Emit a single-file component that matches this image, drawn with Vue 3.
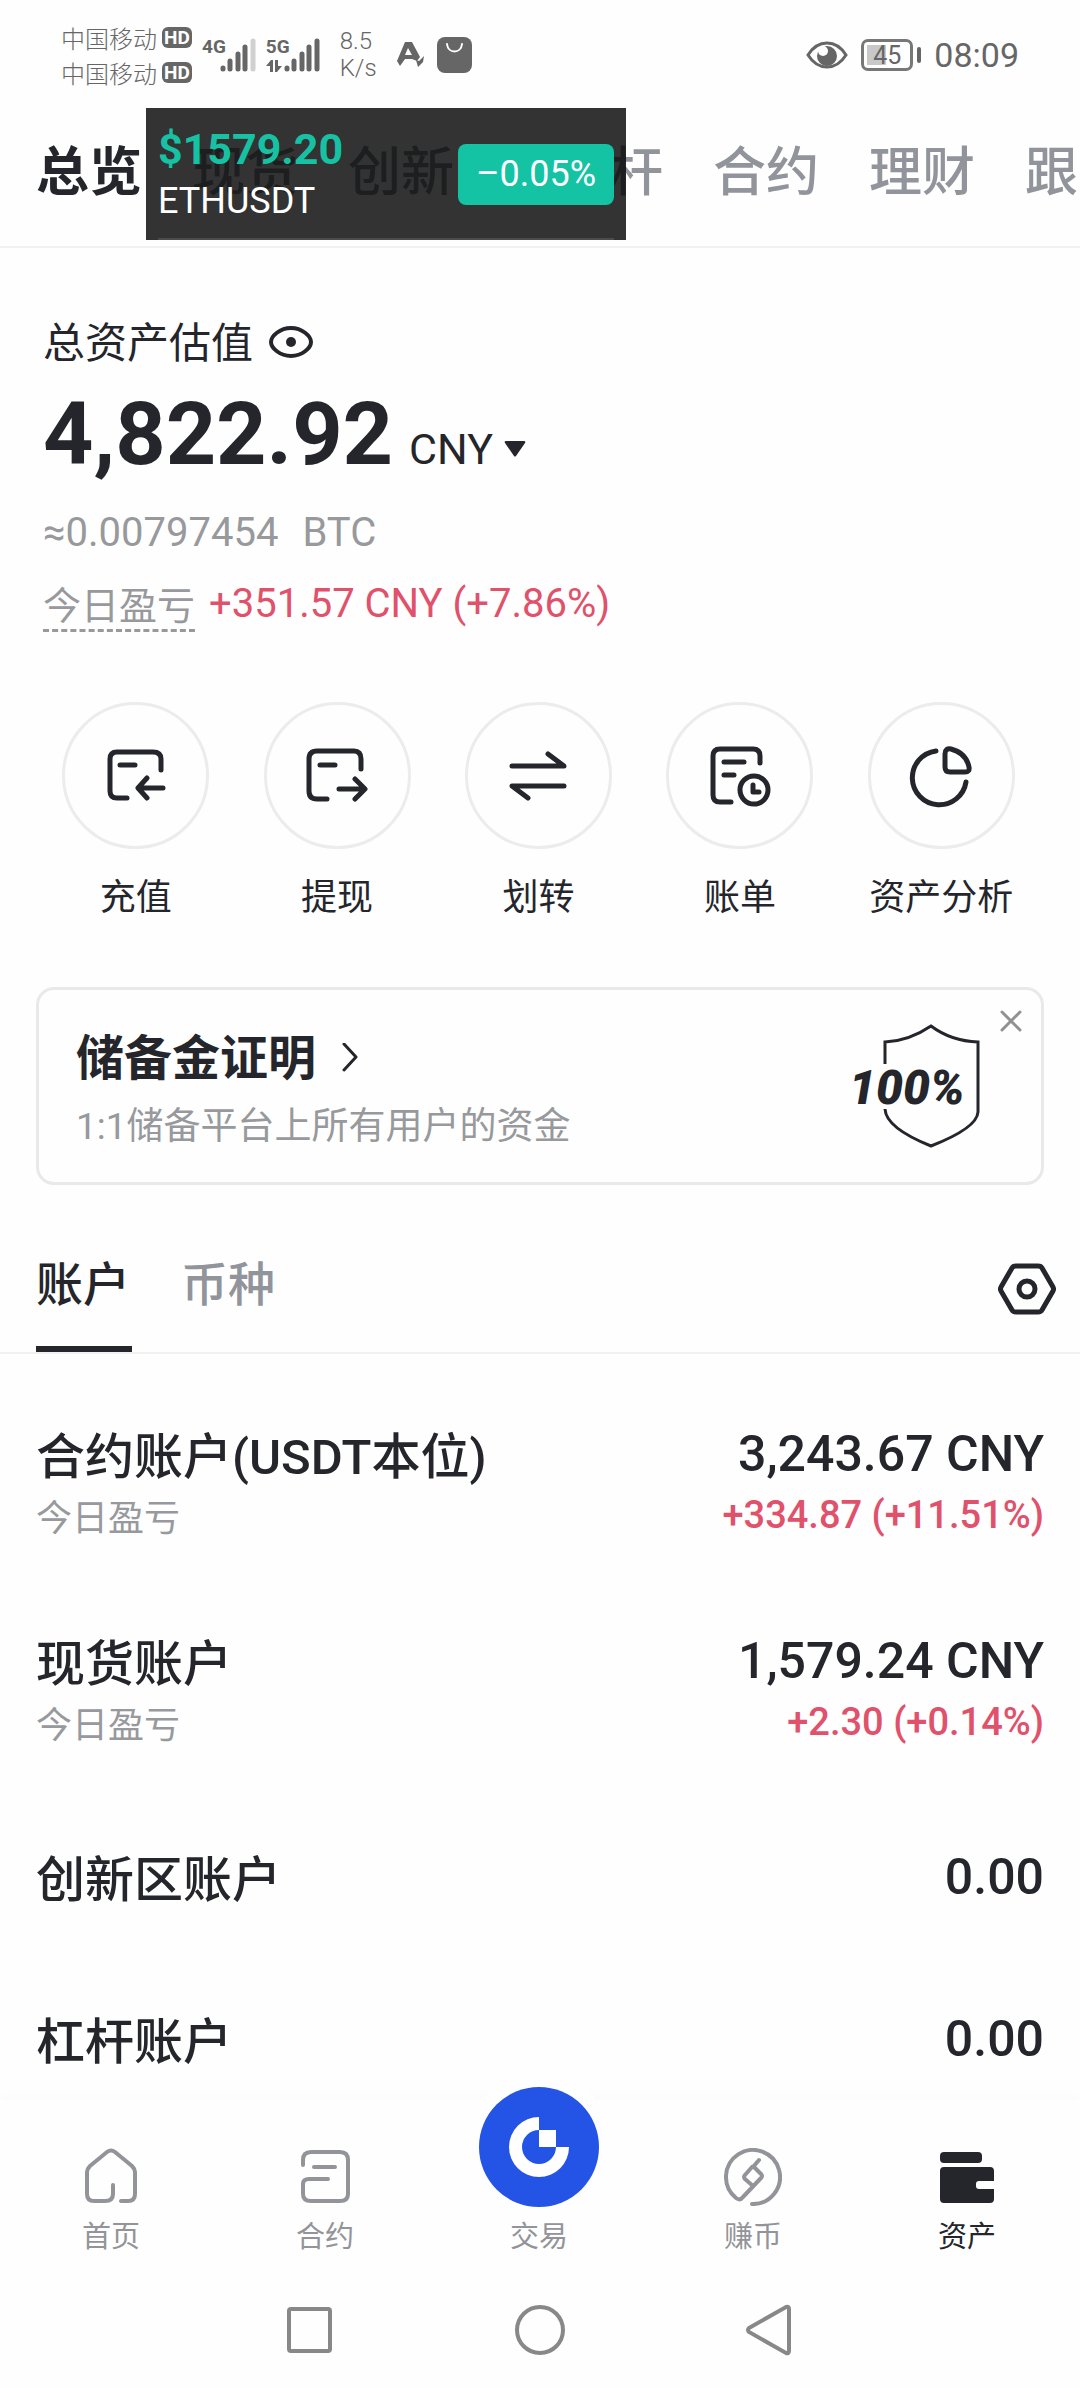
<script setup>
import { ref } from 'vue'

const sections = ['总览', '现货', '创新区', '杠杆', '合约', '理财', '跟单']
const activeSection = ref('总览')

const actions = [
  { name: '充值', icon: 'deposit' },
  { name: '提现', icon: 'withdraw' },
  { name: '划转', icon: 'transfer' },
  { name: '账单', icon: 'bill' },
  { name: '资产分析', icon: 'analysis' },
]

const lists = ['账户', '币种']
const activeList = ref('账户')

const accounts = [
  { name: '合约账户(USDT本位)', value: '3,243.67 CNY', pnl: '+334.87 (+11.51%)' },
  { name: '现货账户', value: '1,579.24 CNY', pnl: '+2.30 (+0.14%)' },
  { name: '创新区账户', value: '0.00' },
  { name: '杠杆账户', value: '0.00' },
]
</script>

<template>
  <div class="app">
    <header class="status">
      <div class="carriers">
        <div class="carrier"><span>中国移动</span><b class="hd">HD</b></div>
        <div class="carrier"><span>中国移动</span><b class="hd">HD</b></div>
      </div>
      <div class="signal first">
        <b class="gen">4G</b>
        <svg width="36" height="34" viewBox="0 0 36 34" fill="none" stroke="#666" stroke-width="5" stroke-linecap="round">
          <path d="M3 30v1M10 23v8M18 16v15M25 9v22" />
          <path d="M33 3v28" stroke="#d0d0d0" />
        </svg>
      </div>
      <div class="signal">
        <div class="gen-stack">
          <b class="gen">5G</b>
          <svg width="16" height="12" viewBox="0 0 16 12" fill="#666"><path d="M0 6 5 0h2v12H4V6zM9 0h3v6h4l-5 6H9z" /></svg>
        </div>
        <svg width="36" height="34" viewBox="0 0 36 34" fill="none" stroke="#666" stroke-width="5" stroke-linecap="round">
          <path d="M3 30v1M10 23v8M18 16v15M25 9v22M33 3v28" />
        </svg>
      </div>
      <div class="speed"><span>8.5</span><span>K/s</span></div>
      <svg class="a-logo" width="28" height="26" viewBox="0 0 28 26" fill="#666">
        <path fill-rule="evenodd" d="M8 0h7l8 15-3 4-5-2H8l-5 7-3-5zM11 6l-3 7h7z" />
        <path d="m19 18 3 1 5-5-1 6-5 5z" />
      </svg>
      <svg class="bag" width="35" height="36" viewBox="0 0 35 36">
        <rect width="35" height="36" rx="8" fill="#666" />
        <path d="M10 7c1 10 14 10 15 0" fill="none" stroke="#fff" stroke-width="2" stroke-linecap="round" />
      </svg>
      <div class="status-right">
        <svg width="42" height="30" viewBox="0 0 42 30">
          <path d="M2 15C12-1 30-1 40 15 30 31 12 31 2 15Z" fill="none" stroke="#666" stroke-width="3" />
          <circle cx="21" cy="16" r="10" fill="#666" />
          <circle cx="17" cy="11" r="5" fill="#fff" />
        </svg>
        <div class="battery">
          <div class="cell"><i class="charge"></i><span>45</span></div>
          <i class="tip"></i>
        </div>
        <time>08:09</time>
      </div>
    </header>

    <nav class="sections">
      <button v-for="s in sections" :key="s" :class="{ active: s === activeSection }" @click="activeSection = s">{{ s }}</button>
    </nav>

    <aside class="ticker">
      <div class="pair">
        <strong>$1579.20</strong>
        <span>ETHUSDT</span>
      </div>
      <span class="change">–0.05%</span>
      <i class="grip"></i>
    </aside>

    <main>
      <section class="summary">
        <div class="label">
          <span>总资产估值</span>
          <button aria-label="隐藏金额">
            <svg width="46" height="36" viewBox="0 0 46 36" fill="none" stroke="#24262c" stroke-width="4">
              <path d="M3 16C3 10 12 2 23 2s20 8 20 14-9 14-20 14S3 22 3 16Z" />
              <circle cx="23" cy="16" r="5" fill="#24262c" stroke="none" />
            </svg>
          </button>
        </div>
        <div class="amount">
          <strong>4,822.92</strong>
          <button class="currency">CNY
            <svg width="22" height="16" viewBox="0 0 22 16" fill="#24262c"><path d="M2 0h18q2 0 1 2l-9 13q-1 1-2 0L1 2q-1-2 1-2z" /></svg>
          </button>
        </div>
        <div class="btc"><span>≈0.00797454</span><span>BTC</span></div>
        <div class="today"><span class="hint">今日盈亏</span><span class="up">+351.57 CNY (+7.86%)</span></div>
      </section>

      <section class="actions">
        <button v-for="a in actions" :key="a.name">
          <span class="ring">
            <svg width="64" height="64" viewBox="2 0 64 64" fill="none" stroke="#24262c" stroke-width="5" stroke-linecap="round" stroke-linejoin="round">
              <template v-if="a.icon === 'deposit'">
                <path d="M25 54H15q-7 0-7-7V15q0-7 7-7h36q8 0 8 7v11M18 21h15M61 44H37M45 34 36 44l9 10" />
              </template>
              <template v-if="a.icon === 'withdraw'">
                <path d="M24 55H14q-8 0-8-8V15q0-8 8-8h37q7 0 7 8v10M17 21h15M36 45h24M52 35l10 10-10 10" />
              </template>
              <template v-if="a.icon === 'transfer'">
                <path d="M8 22h52L44 10M60 42H8l16 12" />
              </template>
              <template v-if="a.icon === 'bill'">
                <path d="M25 58H14q-7 0-7-7V12q0-7 7-7h33q7 0 7 7v7M18 18h20M18 31h10" />
                <circle cx="48" cy="46" r="14" />
                <path d="M47 41v7h6" />
              </template>
              <template v-if="a.icon === 'analysis'">
                <path d="M29 7A27 27 0 1 0 59 38M38 10q0-6 6-5 15 4 18 18 1 5-4 5H43q-5 0-5-5z" />
              </template>
            </svg>
          </span>
          <span class="name">{{ a.name }}</span>
        </button>
      </section>

      <section class="reserve">
        <div class="reserve-text">
          <a href="#reserve">储备金证明
            <svg width="20" height="32" viewBox="0 0 20 32" fill="none" stroke="#24262c" stroke-width="3" stroke-linecap="round" stroke-linejoin="round"><path d="m4 1 12 13L4 27" /></svg>
          </a>
          <p>1:1储备平台上所有用户的资金</p>
        </div>
        <svg class="shield" width="132" height="124" viewBox="-4 0 132 124">
          <path d="M32 40V18q24-1 46-16 20 15 47 16v70q-1 16-47 34-45-18-46-37" fill="none" stroke="#24262c" stroke-width="3" />
          <text x="-4" y="80">100%</text>
        </svg>
        <button class="close" aria-label="关闭">
          <svg width="22" height="22" viewBox="0 0 22 22" stroke="#919191" stroke-width="3" stroke-linecap="round"><path d="m2 2 18 18M20 2 2 20" /></svg>
        </button>
      </section>

      <nav class="lists">
        <button v-for="l in lists" :key="l" :class="{ active: l === activeList }" @click="activeList = l">{{ l }}</button>
        <button class="settings" aria-label="设置">
          <svg width="58" height="52" viewBox="0 0 58 52" fill="none" stroke="#24262c" stroke-width="5" stroke-linejoin="round">
            <path d="M18 3h22q3 0 4 2l11 19q1 2 0 4L44 47q-1 2-4 2H18q-3 0-4-2L3 28q-1-2 0-4L14 5q1-2 4-2Z" />
            <circle cx="29" cy="26" r="8" />
          </svg>
        </button>
      </nav>

      <ul class="accounts">
        <li v-for="a in accounts" :key="a.name" :class="{ plain: !a.pnl }">
          <div class="names">
            <span class="title">{{ a.name }}</span>
            <span v-if="a.pnl" class="sub">今日盈亏</span>
          </div>
          <div class="values">
            <span class="value">{{ a.value }}</span>
            <span v-if="a.pnl" class="up">{{ a.pnl }}</span>
          </div>
        </li>
      </ul>
    </main>

    <nav class="tabbar">
      <a href="#home">
        <svg width="56" height="56" viewBox="0 0 56 56"><path d="M38 53h7q7 0 7-7V24q0-3-3-6L32 4q-4-3-8 0L7 18q-3 3-3 6v22q0 7 7 7h11q8 0 8-7V37" /></svg>
        <span>首页</span>
      </a>
      <a href="#futures">
        <svg width="56" height="56" viewBox="0 0 56 56"><path d="M6 17v-5q0-8 8-8h29q8 0 8 8v34q0 7-8 7H14q-8 0-8-7V36q0-5 6-5h19M17 19h21" /></svg>
        <span>合约</span>
      </a>
      <a href="#trade" class="trade">
        <i class="orb">
          <svg width="60" height="60" viewBox="0 0 60 60">
            <path d="M30 0A30 30 0 1 0 60 30H47A17 17 0 1 1 30 13Z" fill="#fff" />
            <path d="M30 13h17v17H30z" fill="#fff" />
          </svg>
        </i>
        <span>交易</span>
      </a>
      <a href="#earn">
        <svg width="58" height="58" viewBox="0 0 58 58"><path d="M28 56A27 27 0 1 0 12 50q4 3 7-1L37 30q2-2 0-4l-7-7q-1-1-2 0l-7 8q-2 2 0 4l8 7M29 19l6-7" /></svg>
        <span>赚币</span>
      </a>
      <a href="#assets" class="active">
        <svg width="56" height="56" viewBox="0 0 56 56"><rect x="1" y="4" width="42" height="11" rx="4" /><path d="M5 19h46q4 0 4 4v10H40q-3 0-3 3v2q0 3 3 3h15v10q0 4-4 4H5q-4 0-4-4V23q0-4 4-4z" /></svg>
        <span>资产</span>
      </a>
    </nav>

    <footer class="system">
      <button aria-label="最近任务"><svg width="52" height="52" viewBox="0 0 52 52"><rect x="5" y="5" width="41" height="42" rx="2" /></svg></button>
      <button aria-label="主屏幕"><svg width="52" height="52" viewBox="0 0 52 52"><circle cx="26" cy="26" r="23" /></svg></button>
      <button aria-label="返回"><svg width="52" height="52" viewBox="0 0 52 52"><path d="M5 24 42 3q3-1 3 2v42q0 3-3 2L5 28q-2-2 0-4Z" /></svg></button>
    </footer>
  </div>
</template>

<style>
body {
  margin: 0;
  background: #fefefe;
}
</style>

<style scoped>
.app {
  position: relative;
  display: flex;
  flex-direction: column;
  height: 100vh;
  overflow: hidden;
  background: #fefefe;
  color: #24262c;
  font-family: Roboto, "Noto Sans CJK SC", sans-serif;
}
button {
  padding: 0;
  border: 0;
  background: none;
  color: inherit;
  font: inherit;
  cursor: pointer;
}
a {
  color: inherit;
  text-decoration: none;
}
svg {
  display: block;
  flex: none;
}

.status {
  display: flex;
  align-items: center;
  flex: none;
  box-sizing: border-box;
  height: 108px;
  padding: 2px 61px 0 61px;
  color: #666;
}
.carrier {
  display: flex;
  align-items: center;
  gap: 5px;
  height: 35px;
  font-size: 24px;
  font-weight: 300;
}
.hd {
  width: 30px;
  border-radius: 6px;
  background: #666;
  color: #fff;
  font-size: 19px;
  font-weight: 700;
  line-height: 21px;
  text-align: center;
}
.signal {
  display: flex;
  align-items: flex-start;
  margin-left: 10px;
}
.gen {
  font-size: 19px;
  font-weight: 700;
  line-height: 18px;
}
.gen-stack {
  display: flex;
  flex-direction: column;
  gap: 4px;
}
.signal > svg {
  margin-left: -6px;
}
.speed {
  display: flex;
  flex-direction: column;
  margin-left: 20px;
  font-size: 24px;
  font-weight: 300;
  line-height: 27px;
}
.a-logo {
  margin-left: 20px;
}
.bag {
  margin-left: 12px;
}
.status-right {
  display: flex;
  align-items: center;
  gap: 13px;
  margin-left: auto;
}
.battery {
  display: flex;
  align-items: center;
  gap: 4px;
}
.cell {
  position: relative;
  width: 46px;
  height: 26px;
  border: 3px solid #777;
  border-radius: 7px;
  font-size: 25px;
  line-height: 27px;
  text-align: center;
}
.cell span {
  position: relative;
}
.charge {
  position: absolute;
  inset: 3px 24px 3px 3px;
  background: #c8c8c8;
}
.tip {
  width: 4px;
  height: 16px;
  border-radius: 2px;
  background: #666;
}
.status time {
  font-size: 34px;
}

.sections {
  display: flex;
  flex: none;
  gap: 50px;
  padding: 33px 0 41px 36px;
  border-bottom: 2px solid #f1f1f1;
  overflow: hidden;
}
.sections button {
  flex: none;
  color: #91959b;
  font-size: 53px;
  font-weight: 500;
  line-height: 64px;
}
.sections .active {
  color: #24262c;
  font-weight: 700;
}

.ticker {
  position: absolute;
  top: 108px;
  left: 146px;
  z-index: 2;
  display: flex;
  align-items: center;
  justify-content: space-between;
  box-sizing: border-box;
  width: 480px;
  height: 132px;
  padding: 0 12px;
  background: rgba(0, 0, 0, 0.8);
}
.pair {
  display: flex;
  flex-direction: column;
  color: #fff;
  font-size: 36px;
  line-height: 50px;
}
.pair strong {
  color: #16c2a3;
  font-size: 43px;
  line-height: 54px;
}
.change {
  width: 156px;
  border-radius: 8px;
  background: #14c2a4;
  color: #fff;
  font-size: 36px;
  line-height: 61px;
  text-align: center;
}
.grip {
  position: absolute;
  right: 12px;
  bottom: 0;
  left: 12px;
  height: 2px;
  background: #4c4c4c;
}

main {
  flex: 1;
  min-height: 0;
  overflow: hidden;
}
.summary {
  padding: 66px 43px 0;
}
.label {
  display: flex;
  align-items: center;
  gap: 15px;
  font-size: 42px;
  line-height: 60px;
}
.amount {
  display: flex;
  align-items: baseline;
  gap: 16px;
  margin-top: 8px;
  line-height: 104px;
}
.amount strong {
  font-size: 88px;
}
.currency {
  display: flex;
  align-items: center;
  gap: 11px;
  font-size: 43px;
}
.btc {
  display: flex;
  gap: 24px;
  margin-top: 8px;
  color: #97999c;
  font-size: 40px;
  line-height: 48px;
}
.today {
  display: flex;
  align-items: flex-start;
  gap: 14px;
  margin-top: 23px;
  font-size: 40px;
  line-height: 48px;
}
.hint {
  padding-top: 4px;
  border-bottom: 3px dashed #97999c;
  color: #97999c;
  font-size: 38px;
  line-height: 45px;
}
.up {
  color: #e0516b;
}

.actions {
  display: grid;
  grid-template-columns: repeat(5, 1fr);
  margin-top: 70px;
  padding: 0 38px 0 35px;
}
.actions button {
  display: flex;
  flex-direction: column;
  align-items: center;
  gap: 27px;
}
.ring {
  display: flex;
  align-items: center;
  justify-content: center;
  box-sizing: border-box;
  width: 147px;
  height: 147px;
  border: 3px solid #ececec;
  border-radius: 50%;
}
.name {
  font-size: 36px;
  line-height: 44px;
  white-space: nowrap;
}

.reserve {
  position: relative;
  display: flex;
  justify-content: space-between;
  box-sizing: border-box;
  height: 198px;
  margin: 67px 36px 0;
  padding: 34px 60px 0 37px;
  border: 3px solid #e9e9e9;
  border-radius: 18px;
}
.reserve a {
  display: flex;
  align-items: center;
  gap: 24px;
  font-size: 48px;
  font-weight: 700;
  line-height: 70px;
}
.reserve p {
  margin: 9px 0 0;
  color: #97999c;
  font-size: 37px;
  line-height: 48px;
}
.shield text {
  fill: #24262c;
  font-size: 48px;
  font-style: italic;
  font-weight: 900;
}
.close {
  position: absolute;
  top: 20px;
  right: 19px;
}

.lists {
  display: flex;
  align-items: flex-start;
  gap: 49px;
  margin-top: 72px;
  padding: 0 24px 0 36px;
  border-bottom: 2px solid #f1f1f1;
}
.lists button {
  min-width: 96px;
  color: #91959b;
  font-size: 47px;
  font-weight: 500;
  line-height: 56px;
  text-align: left;
}
.lists button.active {
  padding-bottom: 33px;
  border-bottom: 6px solid #24262c;
  color: #24262c;
}
.lists .settings {
  min-width: 0;
  margin: 6px 0 0 auto;
}

.accounts {
  margin: 0;
  padding: 26px 36px 0;
  list-style: none;
}
.accounts li {
  display: flex;
  justify-content: space-between;
  padding: 46px 0;
}
.accounts .plain {
  padding: 55px 0 43px;
}
.names,
.values {
  display: flex;
  flex-direction: column;
  gap: 8px;
}
.values {
  align-items: flex-end;
}
.title {
  font-size: 49px;
  font-weight: 500;
  line-height: 64px;
}
.value {
  font-size: 50px;
  font-weight: 500;
  line-height: 56px;
}
.sub {
  color: #97999c;
  font-size: 36px;
  line-height: 43px;
}
.values .up {
  font-size: 38px;
  font-weight: 500;
  line-height: 50px;
}

.tabbar {
  position: relative;
  display: grid;
  grid-template-columns: repeat(5, 1fr);
  flex: none;
  padding: 48px 6px 0 4px;
  background: #fefefe;
  box-shadow: 0 -4px 12px rgba(0, 0, 0, 0.02);
}
.tabbar a {
  display: flex;
  flex-direction: column;
  align-items: center;
  justify-content: space-between;
  height: 106px;
  color: #929499;
  font-size: 29px;
  line-height: 34px;
}
.tabbar a > svg {
  fill: none;
  stroke: #929499;
  stroke-width: 4;
  stroke-linecap: round;
  stroke-linejoin: round;
}
.tabbar .active {
  color: #24262c;
}
.tabbar .active svg {
  fill: #24262c;
  stroke: none;
}
.tabbar .trade {
  justify-content: flex-end;
  position: relative;
}
.orb {
  position: absolute;
  top: -61px;
  display: flex;
  align-items: center;
  justify-content: center;
  width: 120px;
  height: 120px;
  border-radius: 50%;
  background: #2354e6;
  box-shadow: 0 0 0 14px #fefefe;
}

.system {
  display: flex;
  align-items: center;
  justify-content: center;
  gap: 178px;
  flex: none;
  height: 116px;
  padding-top: 18px;
}
.system svg {
  fill: none;
  stroke: #888;
  stroke-width: 4;
}
</style>
